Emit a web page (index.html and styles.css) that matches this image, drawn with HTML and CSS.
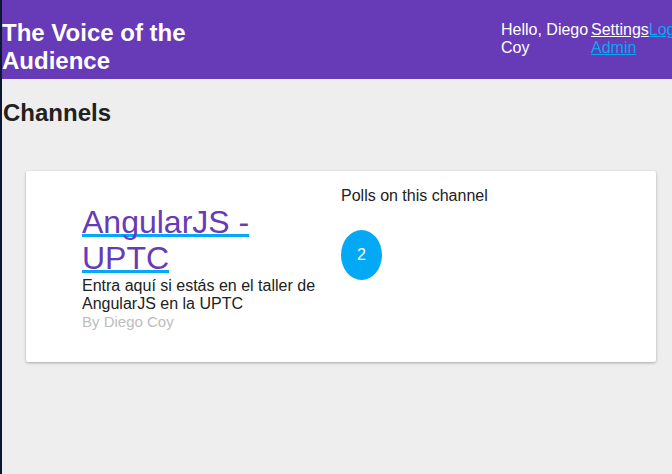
FILE: index.html
```html
<!DOCTYPE html>
<html lang="es">
<head>
<meta charset="utf-8">
<title>The Voice of the Audience</title>
<link rel="stylesheet" href="styles.css">
</head>
<body>
<header class="topbar">
  <h1 class="brand">The Voice of the Audience</h1>
  <div class="greeting">Hello, Diego Coy</div>
  <nav class="usernav"><a class="nav-link nav-settings" href="#">Settings</a><a class="nav-link" href="#">Logout</a> <a class="nav-link" href="#">Admin</a></nav>
</header>
<main class="content">
  <h2 class="page-title">Channels</h2>
  <section class="card">
    <div class="channel-info">
      <a class="channel-name" href="#">AngularJS - UPTC</a>
      <p class="channel-desc">Entra aquí si estás en el taller de AngularJS en la UPTC</p>
      <p class="channel-owner">By Diego Coy</p>
    </div>
    <div class="channel-polls">
      <p class="polls-label">Polls on this channel</p>
      <div class="poll-list">
        <a class="poll-badge" href="#">2</a>
      </div>
    </div>
  </section>
</main>
</body>
</html>
```

FILE: styles.css
```css
html {
  background: #eeeeee;
}
* {
  box-sizing: border-box;
}
body {
  margin: 0;
  min-height: 100vh;
  border-left: 2px solid #0b1733;
  font-family: "Liberation Sans", Arial, sans-serif;
  font-size: 16px;
  color: #212121;
  overflow-x: hidden;
}
.topbar {
  display: flex;
  align-items: flex-start;
  height: 79px;
  padding-top: 19px;
  background: #673ab7;
  color: #ffffff;
  overflow: hidden;
}
.brand {
  width: 220px;
  margin: 0;
  font-size: 24px;
  font-weight: bold;
  line-height: 28px;
}
.greeting {
  width: 90px;
  margin-left: auto;
  margin-top: 2px;
  line-height: 18px;
}
.usernav {
  width: 81px;
  flex: none;
  margin-top: 2px;
  line-height: 18px;
}
.nav-link {
  color: #03a9f4;
  white-space: nowrap;
}
.nav-settings {
  color: #ffffff;
}
.content {
  padding: 0 16px 24px 24px;
}
.page-title {
  margin: 20px 0 44px -23px;
  font-size: 24px;
  font-weight: bold;
  line-height: 28px;
}
.card {
  display: grid;
  grid-template-columns: 1fr 1fr;
  background: #ffffff;
  border-radius: 2px;
  box-shadow: 0 1px 3px rgba(0, 0, 0, 0.3);
  padding: 16px 0 14px;
}
.channel-info {
  padding: 17px 16px 17px 56px;
}
.channel-name {
  font-size: 32px;
  line-height: 36px;
  color: #673ab7;
  text-decoration: underline;
  text-decoration-color: #03a9f4;
  text-decoration-thickness: 3px;
  text-underline-offset: 1px;
  text-decoration-skip-ink: none;
}
.channel-desc {
  margin: 1px 0 0;
  line-height: 18px;
}
.channel-owner {
  margin: 0;
  font-size: 15px;
  line-height: 18px;
  color: #bdbdbd;
}
.channel-polls {
  padding: 0 16px 0 0;
}
.polls-label {
  margin: 0;
  line-height: 18px;
}
.poll-list {
  margin-top: 25px;
}
.poll-badge {
  display: inline-block;
  padding: 16px;
  border-radius: 50%;
  background: #03a9f4;
  color: #ffffff;
  text-decoration: none;
  line-height: 18px;
}
```
